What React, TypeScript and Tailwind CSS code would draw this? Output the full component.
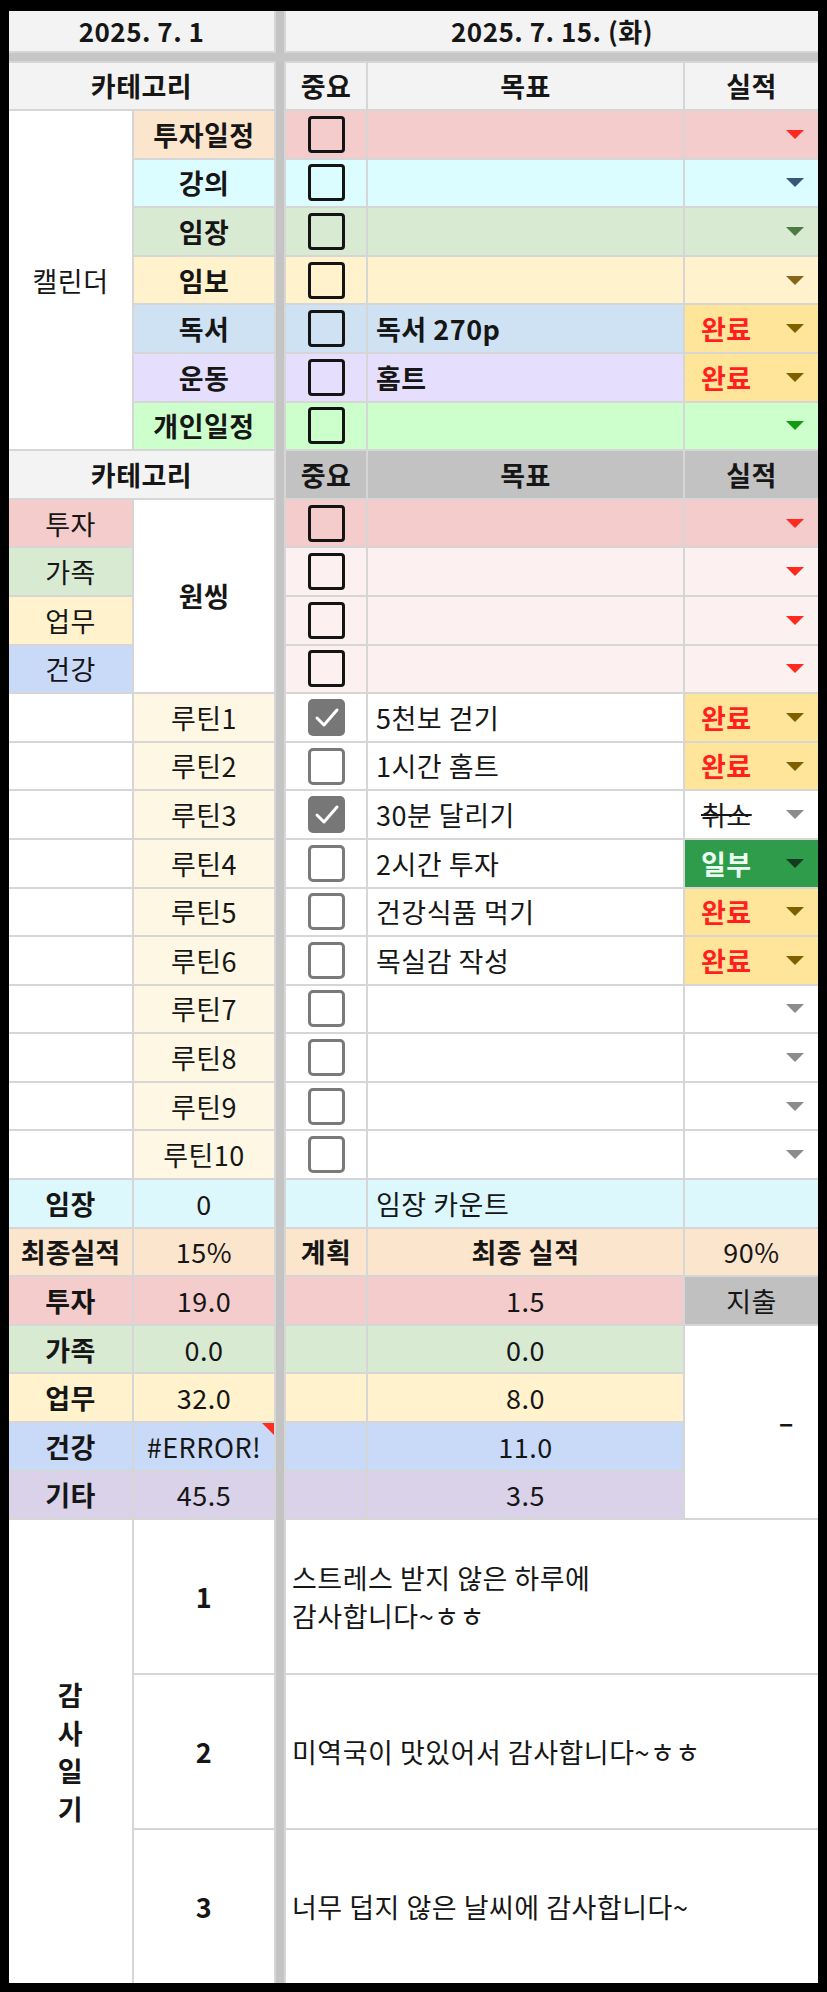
import React from "react";

const F = "font-['Noto_Sans_CJK_KR','Noto_Sans',sans-serif]";
const C = "flex items-center justify-center";

function Arrow({ c }: { c: string }) {
  return (
    <svg width="18" height="9" viewBox="0 0 18 9" className="shrink-0">
      <path d="M0 0H18L9 9Z" fill={c} />
    </svg>
  );
}

function Box({ kind, checked }: { kind: "black" | "gray"; checked?: boolean }) {
  if (kind === "black")
    return <div className="w-[37px] h-[37px] border-[3px] border-[#141414] rounded-[4px]" />;
  if (checked)
    return (
      <div className="w-[37px] h-[37px] rounded-[5px] bg-[#777777] flex items-center justify-center">
        <svg width="37" height="37" viewBox="0 0 37 37">
          <path d="M9 19 L16 26 L29 11" fill="none" stroke="white" strokeWidth="3" strokeLinecap="round" strokeLinejoin="round" />
        </svg>
      </div>
    );
  return <div className="w-[37px] h-[37px] border-[3px] border-[#7a7a7a] rounded-[5px] bg-white" />;
}

type Res = "done" | "cancel" | "partial" | "none";

function Result({ kind, bg, arrow }: { kind: Res; bg: string; arrow: string }) {
  if (kind === "done")
    return (
      <div className="col-start-6 flex items-center justify-between pl-4 pr-[14px] bg-[#ffe599]">
        <span className="text-[#ff1f1f] font-bold">완료</span>
        <Arrow c="#7f6000" />
      </div>
    );
  if (kind === "cancel")
    return (
      <div className="col-start-6 flex items-center justify-between pl-4 pr-[14px] bg-white">
        <span className="line-through">취소</span>
        <Arrow c="#8c8c8c" />
      </div>
    );
  if (kind === "partial")
    return (
      <div className="col-start-6 flex items-center justify-between pl-4 pr-[14px] bg-[#2e9c4b]">
        <span className="text-[#ecfff2] font-bold">일부</span>
        <Arrow c="#143a20" />
      </div>
    );
  return (
    <div className={"col-start-6 flex items-center justify-end pr-[14px] " + bg}>
      <Arrow c={arrow} />
    </div>
  );
}

const cal = [
  { label: "투자일정", lbg: "bg-[#fce5cd]", bg: "bg-[#f4cccc]", arrow: "#ff2a1f", goal: "", res: "none" as Res },
  { label: "강의", lbg: "bg-[#dcfdff]", bg: "bg-[#dcfdff]", arrow: "#3b5579", goal: "", res: "none" as Res },
  { label: "임장", lbg: "bg-[#d9ead3]", bg: "bg-[#d9ead3]", arrow: "#4c7a44", goal: "", res: "none" as Res },
  { label: "임보", lbg: "bg-[#fff2cc]", bg: "bg-[#fff2cc]", arrow: "#86661a", goal: "", res: "none" as Res },
  { label: "독서", lbg: "bg-[#cfe2f3]", bg: "bg-[#cfe2f3]", arrow: "#86661a", goal: "독서 270p", res: "done" as Res },
  { label: "운동", lbg: "bg-[#e5dffd]", bg: "bg-[#e5dffd]", arrow: "#86661a", goal: "홈트", res: "done" as Res },
  { label: "개인일정", lbg: "bg-[#ccffcc]", bg: "bg-[#ccffcc]", arrow: "#139a13", goal: "", res: "none" as Res },
];

const one = [
  { label: "투자", lbg: "bg-[#f4cccc]", bg: "bg-[#f4cccc]" },
  { label: "가족", lbg: "bg-[#d9ead3]", bg: "bg-[#fdf0f0]" },
  { label: "업무", lbg: "bg-[#fff2cc]", bg: "bg-[#fdf0f0]" },
  { label: "건강", lbg: "bg-[#c9daf8]", bg: "bg-[#fdf0f0]" },
];

const routines: { n: number; goal: string; checked: boolean; res: Res }[] = [
  { n: 1, goal: "5천보 걷기", checked: true, res: "done" },
  { n: 2, goal: "1시간 홈트", checked: false, res: "done" },
  { n: 3, goal: "30분 달리기", checked: true, res: "cancel" },
  { n: 4, goal: "2시간 투자", checked: false, res: "partial" },
  { n: 5, goal: "건강식품 먹기", checked: false, res: "done" },
  { n: 6, goal: "목실감 작성", checked: false, res: "done" },
  { n: 7, goal: "", checked: false, res: "none" },
  { n: 8, goal: "", checked: false, res: "none" },
  { n: 9, goal: "", checked: false, res: "none" },
  { n: 10, goal: "", checked: false, res: "none" },
];

const summary = [
  { label: "가족", val: "0.0", bg: "bg-[#d9ead3]", right: "0.0" },
  { label: "업무", val: "32.0", bg: "bg-[#fff2cc]", right: "8.0" },
  { label: "건강", val: "#ERROR!", bg: "bg-[#c9daf8]", right: "11.0" },
  { label: "기타", val: "45.5", bg: "bg-[#d9d2e9]", right: "3.5" },
];

export default function App() {
  return (
    <div className={`${F} w-[827px] h-[1992px] bg-black pt-[11px] pl-[9px] pr-[9px] pb-[9px] overflow-hidden text-[#161616]`}>
      <div className="grid grid-cols-[123px_140px_8px_80px_315px_133px] grid-rows-[40px_8px_46px_repeat(29,46.6px)_153px_153px_153px] gap-[2px] bg-[#d6d6d6] text-[27px] tracking-[0.5px] leading-[1.3]">
        {/* fixed dividers */}
        <div className="col-start-3 row-start-1 row-span-full bg-[#c4c4c4]" />
        <div className="col-start-1 col-span-6 row-start-2 bg-[#c6c6c6]" />

        {/* header 1 */}
        <div className={`col-start-1 col-span-2 ${C} bg-[#f3f3f3] font-bold text-[26px]`}>2025. 7. 1</div>
        <div className={`col-start-4 col-span-3 ${C} bg-[#f3f3f3] font-bold text-[26px]`}>2025. 7. 15. (화)</div>

        {/* header 2 */}
        <div className={`col-start-1 col-span-2 ${C} bg-[#f3f3f3] font-bold`}>카테고리</div>
        <div className={`col-start-4 ${C} bg-[#f3f3f3] font-bold`}>중요</div>
        <div className={`col-start-5 ${C} bg-[#f3f3f3] font-bold`}>목표</div>
        <div className={`col-start-6 ${C} bg-[#f3f3f3] font-bold`}>실적</div>

        {/* calendar */}
        {cal.map((r, i) => (
          <React.Fragment key={r.label}>
            {i === 0 && <div className={`col-start-1 row-span-7 ${C} bg-white`}>캘린더</div>}
            <div className={`col-start-2 ${C} font-bold ${r.lbg}`}>{r.label}</div>
            <div className={`col-start-4 ${C} ${r.bg}`}>
              <Box kind="black" />
            </div>
            <div className={`col-start-5 flex items-center pl-2 font-bold ${r.bg}`}>{r.goal}</div>
            <Result kind={r.res} bg={r.bg} arrow={r.arrow} />
          </React.Fragment>
        ))}

        {/* header 3 */}
        <div className={`col-start-1 col-span-2 ${C} bg-[#f3f3f3] font-bold`}>카테고리</div>
        <div className={`col-start-4 ${C} bg-[#c2c2c2] font-bold`}>중요</div>
        <div className={`col-start-5 ${C} bg-[#c2c2c2] font-bold`}>목표</div>
        <div className={`col-start-6 ${C} bg-[#c2c2c2] font-bold`}>실적</div>

        {/* one thing */}
        {one.map((r, i) => (
          <React.Fragment key={r.label}>
            <div className={`col-start-1 ${C} ${r.lbg}`}>{r.label}</div>
            {i === 0 && <div className={`col-start-2 row-span-4 ${C} bg-white font-bold`}>원씽</div>}
            <div className={`col-start-4 ${C} ${r.bg}`}>
              <Box kind="black" />
            </div>
            <div className={`col-start-5 ${r.bg}`} />
            <Result kind="none" bg={r.bg} arrow="#ff2a1f" />
          </React.Fragment>
        ))}

        {/* routines */}
        {routines.map((r) => (
          <React.Fragment key={r.n}>
            <div className="col-start-1 bg-white" />
            <div className={`col-start-2 ${C} bg-[#fef7e4]`}>루틴{r.n}</div>
            <div className={`col-start-4 ${C} bg-white`}>
              <Box kind="gray" checked={r.checked} />
            </div>
            <div className="col-start-5 flex items-center pl-2 bg-white">{r.goal}</div>
            <Result kind={r.res} bg="bg-white" arrow="#8c8c8c" />
          </React.Fragment>
        ))}

        {/* summary */}
        <div className={`col-start-1 ${C} bg-[#dcf8fc] font-bold`}>임장</div>
        <div className={`col-start-2 ${C} bg-[#dcf8fc]`}>0</div>
        <div className="col-start-4 bg-[#dcf8fc]" />
        <div className="col-start-5 flex items-center pl-2 bg-[#dcf8fc]">임장 카운트</div>
        <div className="col-start-6 bg-[#dcf8fc]" />

        <div className={`col-start-1 ${C} bg-[#fce5cd] font-bold tracking-normal`}>최종실적</div>
        <div className={`col-start-2 ${C} bg-[#fce5cd]`}>15%</div>
        <div className={`col-start-4 ${C} bg-[#fce5cd] font-bold`}>계획</div>
        <div className={`col-start-5 ${C} bg-[#fce5cd] font-bold`}>최종 실적</div>
        <div className={`col-start-6 ${C} bg-[#fce5cd]`}>90%</div>

        <div className={`col-start-1 ${C} bg-[#f4cccc] font-bold`}>투자</div>
        <div className={`col-start-2 ${C} bg-[#f4cccc]`}>19.0</div>
        <div className="col-start-4 bg-[#f4cccc]" />
        <div className={`col-start-5 ${C} bg-[#f4cccc]`}>1.5</div>
        <div className={`col-start-6 ${C} bg-[#c0c0c0]`}>지출</div>

        {summary.map((r, i) => (
          <React.Fragment key={r.label}>
            <div className={`col-start-1 ${C} font-bold ${r.bg}`}>{r.label}</div>
            <div className={`col-start-2 relative ${C} ${r.bg}`}>
              {r.val}
              {r.val === "#ERROR!" && (
                <svg width="12" height="12" viewBox="0 0 12 12" className="absolute top-0 right-0">
                  <path d="M0 0H12V12Z" fill="#ff2d20" />
                </svg>
              )}
            </div>
            <div className={`col-start-4 ${r.bg}`} />
            <div className={`col-start-5 ${C} ${r.bg}`}>{r.right}</div>
            {i === 0 && (
              <div className="col-start-6 row-span-4 flex items-center justify-end pr-[24px] bg-white font-bold">–</div>
            )}
          </React.Fragment>
        ))}

        {/* gratitude */}
        <div className="col-start-1 row-span-3 flex flex-col items-center justify-center bg-white font-bold leading-[38px]">
          <span>감</span>
          <span>사</span>
          <span>일</span>
          <span>기</span>
        </div>
        <div className={`col-start-2 ${C} bg-white font-bold`}>1</div>
        <div className="col-start-4 col-span-3 flex flex-col justify-center pl-[6px] bg-white leading-[38px]">
          <span>스트레스 받지 않은 하루에</span>
          <span>감사합니다~ㅎㅎ</span>
        </div>
        <div className={`col-start-2 ${C} bg-white font-bold`}>2</div>
        <div className="col-start-4 col-span-3 flex items-center pl-[6px] bg-white">미역국이 맛있어서 감사합니다~ㅎㅎ</div>
        <div className={`col-start-2 ${C} bg-white font-bold`}>3</div>
        <div className="col-start-4 col-span-3 flex items-center pl-[6px] bg-white">너무 덥지 않은 날씨에 감사합니다~</div>
      </div>
    </div>
  );
}
